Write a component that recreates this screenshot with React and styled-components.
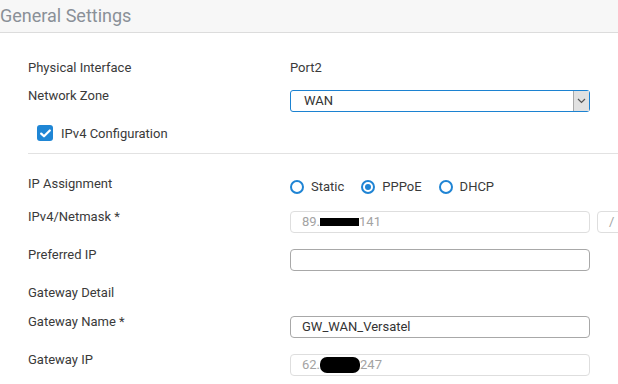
import React from "react"
import styled, { createGlobalStyle } from 'styled-components'

const Global = createGlobalStyle`
html, body {
  margin: 0;
  padding: 0;
  overflow: hidden;
  background: #fff;
}
body {
  font-family: Roboto, "Liberation Sans", Arial, sans-serif;
  font-size: 13px;
  color: #333;
}
`

const Page = styled.div`
width: 618px;
height: 384px;
overflow: hidden;
`

const Header = styled.div`
height: 33px;
box-sizing: border-box;
background: #f7f7f7;
border-bottom: 1px solid #dcdcdc;
display: flex;
align-items: center;
padding-bottom: 2px;
font-size: 18px;
color: #8a9097;
`

const Body = styled.div`
padding: 28px 0 0 28px;
`

const Row = styled.div`
display: flex;
align-items: flex-start;
height: ${p => p.$h}px;
`

const Label = styled.div`
width: 262px;
flex: none;
line-height: 14px;
color: #3a3a3a;
`

const Value = styled.div`
display: flex;
align-items: center;
gap: 7px;
line-height: 14px;
margin-top: ${p => p.$top || 0}px;
`

const Plain = styled.span`
color: #3a3a3a;
`

const Select = styled.div`
width: 300px;
height: 22px;
box-sizing: border-box;
border: 1px solid #1c82d1;
border-radius: 3px;
display: flex;
align-items: center;
padding-left: 13px;
position: relative;
color: #333;
`

const SelectArrow = styled.div`
position: absolute;
right: 0;
top: 0;
width: 16px;
height: 20px;
box-sizing: border-box;
background: #e1e1e1;
border-left: 1px solid #a9a9a9;
display: flex;
align-items: center;
justify-content: center;
`

const Input = styled.div`
width: ${p => p.$w || 300}px;
height: 22px;
flex: none;
box-sizing: border-box;
border: 1px solid ${p => (p.$disabled ? '#dedede' : '#a8a8a8')};
border-radius: 4px;
display: flex;
align-items: center;
padding-left: 11px;
color: ${p => (p.$disabled ? '#a3a3a3' : '#333')};
overflow: hidden;
white-space: nowrap;
`

const Redact = styled.span`
display: inline-block;
background: #000;
width: ${p => p.$w}px;
height: ${p => p.$hh}px;
border-radius: ${p => p.$r || 0}px;
vertical-align: middle;
`

const CheckRow = styled.div`
display: flex;
align-items: center;
gap: 8px;
height: 16px;
padding-left: 9px;
`

const Checkbox = styled.div`
width: 16px;
height: 16px;
border-radius: 3px;
background: #1f86d5;
display: flex;
align-items: center;
justify-content: center;
`

const Divider = styled.div`
height: 1px;
background: #e2e2e2;
margin: 12px 0 23px;
`

const Radios = styled.div`
display: flex;
align-items: center;
gap: 17px;
margin-top: 2px;
`

const RadioItem = styled.label`
display: flex;
align-items: center;
gap: 7px;
color: #3a3a3a;
`

const RadioDot = styled.span`
width: 14px;
height: 14px;
box-sizing: border-box;
border: 2px solid #1f84d4;
border-radius: 50%;
display: flex;
align-items: center;
justify-content: center;
&::after {
  content: '';
  width: 6px;
  height: 6px;
  border-radius: 50%;
  background: ${p => (p.$on ? '#1f84d4' : 'transparent')};
}
`

const Radio = ({ on, children }) => (
  <RadioItem>
    <RadioDot $on={on} />
    {children}
  </RadioItem>
)

export default function App() {
  return (
    <Page>
      <Global />
      <Header>General Settings</Header>
      <Body>
        <Row $h={28}>
          <Label>Physical Interface</Label>
          <Value><Plain>Port2</Plain></Value>
        </Row>
        <Row $h={36}>
          <Label>Network Zone</Label>
          <Value $top={1}>
            <Select>
              WAN
              <SelectArrow>
                <svg width="9" height="6" viewBox="0 0 9 6">
                  <path d="M1 1 L4.5 4.5 L8 1" fill="none" stroke="#555" strokeWidth="1.2" />
                </svg>
              </SelectArrow>
            </Select>
          </Value>
        </Row>
        <CheckRow>
          <Checkbox>
            <svg width="11" height="9" viewBox="0 0 11 9">
              <path d="M1.2 4.6 L4 7.3 L9.8 1.5" fill="none" stroke="#fff" strokeWidth="2.2" strokeLinecap="round" strokeLinejoin="round" />
            </svg>
          </Checkbox>
          <Plain>IPv4 Configuration</Plain>
        </CheckRow>
        <Divider />
        <Row $h={33}>
          <Label>IP Assignment</Label>
          <Radios>
            <Radio>Static</Radio>
            <Radio on>PPPoE</Radio>
            <Radio>DHCP</Radio>
          </Radios>
        </Row>
        <Row $h={38}>
          <Label>IPv4/Netmask *</Label>
          <Value $top={1}>
            <Input $disabled>89.<Redact $w={39} $hh={8} />141</Input>
            <Input $disabled $w={60}>/</Input>
          </Value>
        </Row>
        <Row $h={38}>
          <Label>Preferred IP</Label>
          <Value $top={1}>
            <Input />
          </Value>
        </Row>
        <Row $h={29}>
          <Label>Gateway Detail</Label>
        </Row>
        <Row $h={38}>
          <Label>Gateway Name *</Label>
          <Value $top={1}>
            <Input>GW_WAN_Versatel</Input>
          </Value>
        </Row>
        <Row $h={38}>
          <Label>Gateway IP</Label>
          <Value $top={1}>
            <Input $disabled>62.<Redact $w={40} $hh={16} $r={7} />247</Input>
          </Value>
        </Row>
      </Body>
    </Page>
  )
}
